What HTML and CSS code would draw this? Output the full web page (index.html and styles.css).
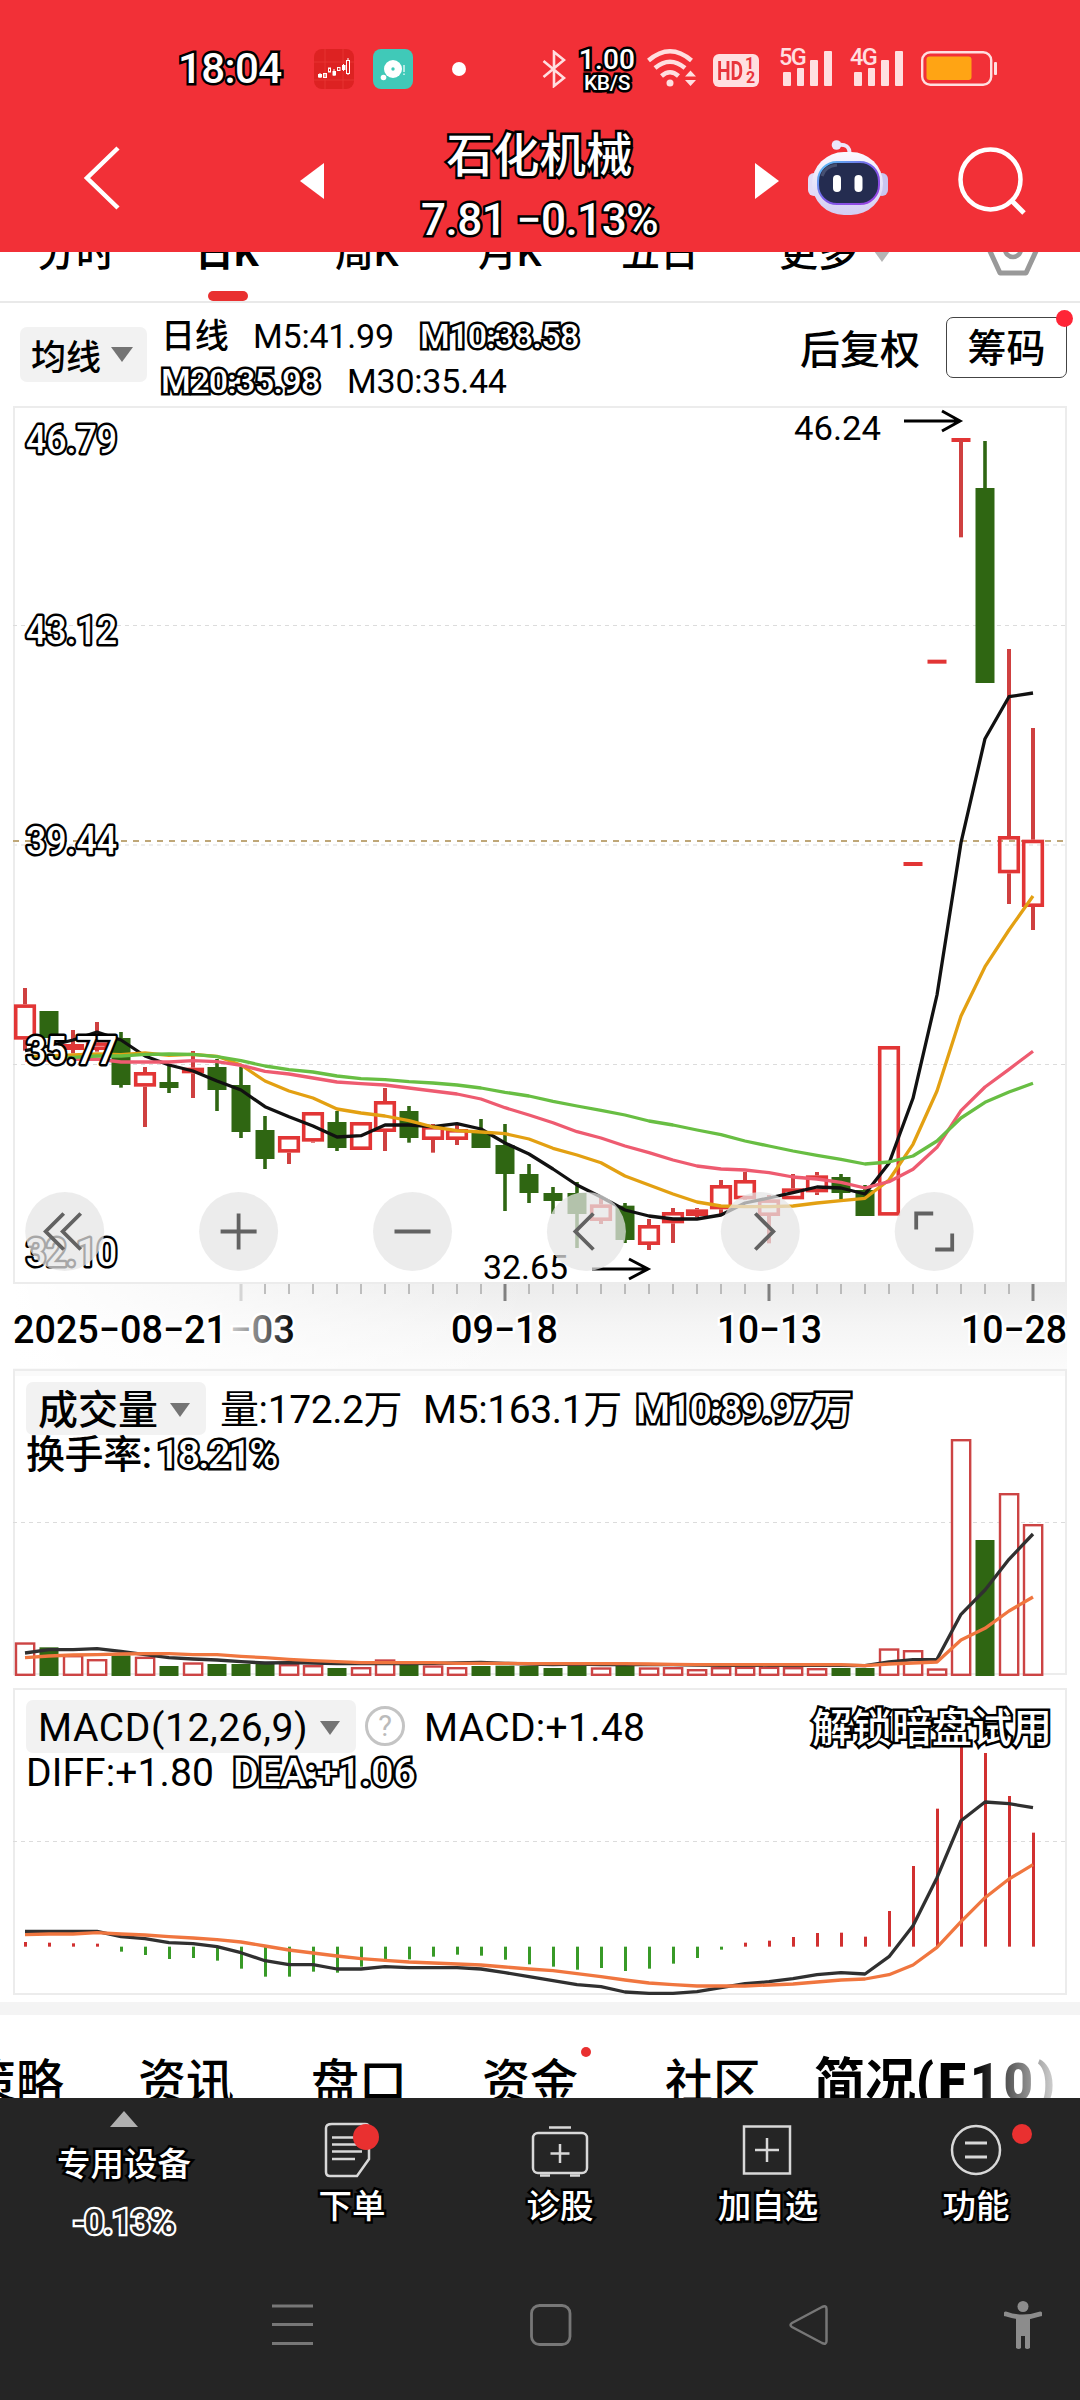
FILE: index.html
```html
<!DOCTYPE html>
<html lang="zh-CN">
<head>
<meta charset="utf-8">
<title>石化机械</title>
<link rel="stylesheet" href="styles.css">
</head>
<body>
<header class="header">
  <div class="status">
    <span class="clock outlined">18:04</span>
    <svg class="app-stock" width="40" height="40" viewBox="0 0 40 40">
      <rect width="40" height="40" rx="8" fill="#dd2222"/>
      <path d="M11 0V40M29 0V40M0 13H40M0 31H40" stroke="#e93a38" stroke-width=".7"/>
      <g fill="#fff"><rect x="4" y="25" width="4" height="3.5"/><rect x="18.500" y="22" width="3.500" height="4.500"/><rect x="28" y="16" width="3.500" height="5"/></g>
      <g fill="none" stroke="#fff" stroke-width="1"><path d="M6 24v5M11 24v5M20 20v7M29.500 15v7M34 9v17"/><rect x="9.500" y="24.500" width="3" height="4"/><rect x="14.500" y="19" width="2" height="4"/><rect x="23.500" y="18.500" width="2.500" height="3"/><rect x="32.500" y="11.500" width="3" height="13" fill="#dd2222"/></g>
    </svg>
    <svg class="app-disc" width="40" height="40" viewBox="0 0 40 40">
      <rect width="40" height="40" rx="8" fill="#40c9b8"/>
      <circle cx="20" cy="20" r="9" fill="#fff"/><circle cx="20" cy="20" r="1.700" fill="#40c9b8"/><circle cx="10.500" cy="28.500" r="2.800" fill="#fff"/>
      <path d="M31 16v7M31 24.500v1.500" stroke="#d9f5f1" stroke-width="1.500"/>
    </svg>
    <span class="more-dot"></span>
    <svg class="bluetooth" width="24" height="38" viewBox="0 0 24 38"><path d="M1.500 11 22 28 12 36V2l10 8L1.500 27" fill="none" stroke="#ffdfe0" stroke-width="2.600"/></svg>
    <div class="speed outlined"><b>1.00</b><b class="unit">KB/S</b></div>
    <svg class="wifi" width="50" height="40" viewBox="0 0 50 40">
      <g fill="none" stroke="#ffdfe0" stroke-width="4.500"><path d="M1.500 12.500Q23 -6 44.500 12.500"/><path d="M8 20Q23 7.500 38 20"/><path d="M14.500 28Q23 20.500 31.500 28"/></g>
      <circle cx="23" cy="35" r="3.500" fill="#ffdfe0"/><path d="M38 28.500 43.500 22.500 49 28.500zM38 32h11l-5.500 6z" fill="#ffdfe0"/>
    </svg>
    <span class="hd"><b>HD</b><span class="hd-n"><i>1</i><i>2</i></span></span>
    <span class="signal">
      <b>5G</b>
      <svg width="53" height="38" viewBox="0 0 53 38"><g fill="#ffdfe0"><rect x="4" y="24" width="8" height="14" rx="1"/><rect x="18" y="20" width="7" height="18" rx="1"/><rect x="31" y="12" width="8" height="26" rx="1"/><rect x="45" y="3" width="8" height="35" rx="1"/></g></svg>
    </span>
    <span class="signal second">
      <b>4G</b>
      <svg width="53" height="38" viewBox="0 0 53 38"><g fill="#ffdfe0"><rect x="4" y="24" width="8" height="14" rx="1"/><rect x="18" y="20" width="7" height="18" rx="1"/><rect x="31" y="12" width="8" height="26" rx="1"/><rect x="45" y="3" width="8" height="35" rx="1"/></g></svg>
    </span>
    <svg class="battery" width="76" height="35" viewBox="0 0 76 35"><rect x="1.200" y="1.200" width="69" height="32.500" rx="8" fill="none" stroke="#ffdfe0" stroke-width="2.400"/><rect x="5.500" y="5.500" width="45" height="23.500" rx="3" fill="#ffa414"/><rect x="73" y="11" width="3" height="13" rx="1" fill="#ffdfe0"/></svg>
  </div>
  <div class="titlebar">
    <svg class="back" width="38" height="64" viewBox="0 0 38 64"><path d="M35 2 4 32 35 62" fill="none" stroke="#fff" stroke-width="4.500"/></svg>
    <svg class="prev" width="24" height="36" viewBox="0 0 24 36"><path d="M24 0V36L0 18z" fill="#fff"/></svg>
    <div class="quote">
      <div class="stock-name outlined">石化机械</div>
      <div class="stock-price outlined">7.81 −0.13%</div>
    </div>
    <svg class="next" width="24" height="36" viewBox="0 0 24 36"><path d="M0 0V36L24 18z" fill="#fff"/></svg>
    <svg class="robot" width="82" height="76" viewBox="0 0 82 76">
      <defs>
        <linearGradient id="shell" x1="0" y1="0" x2="0" y2="1"><stop offset="0" stop-color="#fbf8ff"/><stop offset="1" stop-color="#d3cdf3"/></linearGradient>
        <linearGradient id="rim" x1="0" y1="0" x2="1" y2="1"><stop offset="0" stop-color="#57c8f5"/><stop offset=".5" stop-color="#7a5be8"/><stop offset="1" stop-color="#9b3fe0"/></linearGradient>
      </defs>
      <path d="M30 5Q43 3 42.500 14" fill="none" stroke="#ece6fb" stroke-width="4"/><circle cx="29.500" cy="5" r="4.800" fill="#ece6fb"/>
      <rect x="1" y="33" width="12" height="23" rx="6" fill="#e2dcf8"/><rect x="69" y="33" width="12" height="23" rx="6" fill="#c9c5f0"/>
      <rect x="5" y="12" width="71" height="63" rx="32" fill="url(#shell)"/>
      <rect x="11" y="22" width="61" height="42" rx="19" fill="#242c50" stroke="url(#rim)" stroke-width="2"/>
      <path d="M15 36Q18 26 30 25" fill="none" stroke="#465071" stroke-width="3"/>
      <rect x="26" y="35" width="8" height="17" rx="4" fill="#fff"/><rect x="47.500" y="35" width="8" height="17" rx="4" fill="#fff"/>
    </svg>
    <svg class="search" width="68" height="68" viewBox="0 0 68 68"><circle cx="32.500" cy="32.500" r="30" fill="none" stroke="#fff" stroke-width="4.500"/><path d="M54 54 66 66" stroke="#fff" stroke-width="5"/></svg>
  </div>
</header>

<nav class="periods">
  <span>分时</span><span class="on">日K</span><span>周K</span><span>月K</span><span>五日</span><span>更多</span>
  <svg class="caret" width="16" height="12" viewBox="0 0 16 12"><path d="M0 0H16L8 11z" fill="#b5b5b5"/></svg>
  <svg class="gear" width="54" height="54" viewBox="0 0 54 54"><path d="M14 3H40L51 27 40 51H14L3 27z" fill="none" stroke="#999" stroke-width="5" stroke-linejoin="round"/><circle cx="27" cy="27" r="8" fill="none" stroke="#999" stroke-width="4.500"/></svg>
</nav>

<section class="averages">
  <span class="pill ma-pill">均线<svg width="22" height="16" viewBox="0 0 22 16"><path d="M0 0H22L11 15z" fill="#747474"/></svg></span>
  <div class="ma-list">
    <div><span class="w-day">日线</span><span class="w-m5">M5:41.99</span><span class="hollow">M10:38.58</span></div>
    <div><span class="hollow w-m20">M20:35.98</span><span>M30:35.44</span></div>
  </div>
  <span class="adjust">后复权</span>
  <span class="chips">筹码<i class="badge"></i></span>
</section>

<section class="price">
  <svg id="price" width="1080" height="964" viewBox="0 0 1080 964"></svg>
</section>

<section class="panel volume">
  <svg id="volume" class="plot" width="1080" height="318" viewBox="0 0 1080 318"></svg>
  <div class="legend">
    <div class="row first"><span class="pill vol-pill">成交量<svg width="20" height="14" viewBox="0 0 20 14"><path d="M0 0H20L10 14z" fill="#747474"/></svg></span><span class="w-vol">量:172.2万</span><span class="w-v5">M5:163.1万</span><span class="hollow w-v10">M10:89.97万</span></div>
    <div class="row"><span class="w-turn">换手率:</span><span class="hollow turn">18.21%</span></div>
  </div>
</section>

<section class="panel macd">
  <svg id="macd" class="plot" width="1080" height="316" viewBox="0 0 1080 316"></svg>
  <div class="legend">
    <div class="row first"><span class="pill macd-pill">MACD(12,26,9)<svg width="20" height="14" viewBox="0 0 20 14"><path d="M0 0H20L10 14z" fill="#747474"/></svg></span><span class="help">?</span><span class="w-macd">MACD:+1.48</span><span class="unlock hollow">解锁暗盘试用</span></div>
    <div class="row"><span class="w-diff">DIFF:+1.80</span><span class="hollow w-dea">DEA:+1.06</span></div>
  </div>
</section>

<div class="band"></div>

<nav class="sections">
  <span class="s1">策略</span><span>资讯</span><span>盘口</span><span class="has-dot">资金<i></i></span><span>社区</span><span class="current">简况<b>(F10)</b></span>
</nav>

<footer class="footer">
  <div class="actions">
    <div class="sector">
      <svg width="28" height="16" viewBox="0 0 28 16"><path d="M14 0 28 16H0z" fill="#b0b0b0"/></svg>
      <span class="outlined">专用设备</span>
      <span class="change">-0.13%</span>
    </div>
    <div class="action a1">
      <svg width="64" height="56" viewBox="0 0 64 56"><path d="M12 2H45Q49 2 49 6V37L37 54H10Q6 54 6 50V6Q6 2 12 2z" fill="none" stroke="#d8d8d8" stroke-width="2.500"/><path d="M12 15.500H40M12 22.500H40M12 29.500H42M12 37H35" stroke="#d8d8d8" stroke-width="2.500"/><circle cx="46" cy="15" r="13" fill="#e93030"/></svg>
      <span class="outlined">下单</span>
    </div>
    <div class="action a2">
      <svg width="64" height="56" viewBox="0 0 64 56"><rect x="5" y="11" width="54" height="40" rx="5" fill="none" stroke="#d8d8d8" stroke-width="2.500"/><path d="M21 5.500H43M12 53.500H22M42 53.500H52M32 22V41M22.500 31.500H41.500" stroke="#d8d8d8" stroke-width="2.500"/></svg>
      <span class="outlined">诊股</span>
    </div>
    <div class="action a3">
      <svg width="64" height="56" viewBox="0 0 64 56"><path d="M8 4.500H54V51.500H8zM31 16V40M19 28H43" fill="none" stroke="#d8d8d8" stroke-width="2.500"/></svg>
      <span class="outlined">加自选</span>
    </div>
    <div class="action a4">
      <svg width="64" height="56" viewBox="0 0 64 56"><circle cx="32" cy="28" r="24" fill="none" stroke="#d8d8d8" stroke-width="2.500"/><path d="M21 21H43M21 35H43" stroke="#d8d8d8" stroke-width="2.800"/></svg>
      <span class="outlined">功能</span><i class="badge"></i>
    </div>
  </div>
  <div class="system">
    <svg class="n1" width="42" height="42" viewBox="0 0 42 42"><path d="M0 2H41M0 20.500H41M0 39.500H41" stroke="#777" stroke-width="3"/></svg>
    <svg class="n2" width="42" height="42" viewBox="0 0 42 42"><rect x="1.500" y="1.500" width="38.500" height="39" rx="8" fill="none" stroke="#777" stroke-width="2.800"/></svg>
    <svg class="n3" width="42" height="42" viewBox="0 0 42 42"><path d="M34 3 4 19Q1 21 4 23L34 39Q38.500 41 38.500 37V5Q38.500 1 34 3z" fill="none" stroke="#777" stroke-width="2.500"/></svg>
    <svg class="n4" width="38" height="50" viewBox="0 0 38 50"><circle cx="19" cy="6.500" r="5.500" fill="#8c8c8c"/><path d="M2 14Q19 20 36 14" fill="none" stroke="#8c8c8c" stroke-width="5" stroke-linecap="round"/><path d="M12 16H26V48Q23 50 21 48V36H17V48Q15 50 12 48z" fill="#8c8c8c"/></svg>
  </div>
</footer>
<script src="charts.js"></script>
</body>
</html>
```
FILE: styles.css
```css
* { box-sizing: border-box; }
body { margin: 0; width: 1080px; height: 2400px; overflow: hidden; background: #fff; color: #000; font-family: Roboto, "Noto Sans CJK SC", sans-serif; font-weight: 500; }
svg { display: block; flex: none; }
span { white-space: nowrap; }
i { font-style: normal; }
.outlined, .hollow { color: #fff; -webkit-text-stroke: 5px #000; paint-order: stroke fill; stroke-linejoin: round; }
text.hollow { fill: #fff; stroke: #000; stroke-width: 5px; -webkit-text-stroke: 0; font-weight: 500; }

.header { height: 252px; background: #f23037; }
.status { height: 124px; display: flex; align-items: flex-start; padding-left: 178px; }
.clock { width: 136px; padding-top: 45px; font-size: 42px; line-height: 48px; letter-spacing: -0.6px; }
.app-stock { margin-top: 49px; }
.app-disc { margin: 49px 0 0 19px; }
.more-dot { width: 14px; height: 14px; margin: 62px 0 0 39px; border-radius: 50%; background: #fff; flex: none; }
.bluetooth { margin: 50px 0 0 76px; }
.speed { width: 56px; margin: 47px 0 0 13px; display: flex; flex-direction: column; align-items: center; font-size: 28px; line-height: 25px; }
.speed b { font-weight: 500; letter-spacing: .2px; }
.speed .unit { font-size: 21px; line-height: 22px; letter-spacing: -0.3px; }
.wifi { margin: 48px 0 0 12px; }
.hd { width: 46px; height: 33px; margin: 54px 0 0 16px; border-radius: 6px; background: #ffdfe0; color: #e8343b; display: flex; flex: none; align-items: center; padding-left: 4px; font-size: 26px; }
.hd b { transform: scaleX(.74); transform-origin: left; width: 28px; }
.hd-n { display: grid; font-size: 16px; font-weight: 700; line-height: 14px; }
.hd-n i + i { padding-left: 1px; }
.signal { position: relative; margin: 48px 0 0 20px; color: #ffdfe0; }
.signal b { position: absolute; left: 0; top: 0; font-size: 23.500px; line-height: 18px; font-weight: 500; letter-spacing: -1.5px; }
.signal.second { margin-left: 18px; }
.battery { margin: 51px 0 0 18px; }
.titlebar { height: 128px; display: flex; align-items: flex-start; }
.back { margin: 22px 0 0 83px; }
.prev { margin: 39px 0 0 179px; }
.quote { width: 431px; display: flex; flex-direction: column; align-items: center; }
.stock-name { margin-top: 5px; font-size: 46.500px; line-height: 54px; }
.stock-price { margin-top: 9px; font-size: 44px; line-height: 56px; letter-spacing: -0.5px; }
.next { margin-top: 39px; }
.robot { margin: 16px 0 0 28px; }
.search { margin: 23px 0 0 69px; }

.periods { height: 51px; overflow: hidden; border-bottom: 2px solid #e9e9e9; display: flex; align-items: flex-start; padding-left: 37px; font-size: 39px; line-height: 44px; }
.periods span { margin-top: -21px; width: 147px; flex: none; }
.periods span:first-child { width: 158px; }
.periods .on { width: 140px; height: 70px; font-weight: 700; position: relative; }
.periods .on::after { content: ""; position: absolute; left: 13px; bottom: 0; width: 40px; height: 10px; border-radius: 5px; background: #e93030; }
.periods span:nth-child(3), .periods span:nth-child(4) { width: 143px; }
.periods span:nth-child(5) { width: 158px; }
.periods span:nth-child(6) { width: 95px; }
.caret { margin-top: -1px; }
.gear { margin: -30px 0 0 96px; }

.averages { height: 101px; display: flex; align-items: flex-start; }
.pill { background: #f2f2f2; border-radius: 7px; display: flex; align-items: center; flex: none; }
.ma-pill { width: 127px; height: 55px; margin: 24px 0 0 20px; padding-left: 11px; font-size: 35px; gap: 10px; }
.ma-list { width: 653px; padding: 11px 0 0 14px; font-size: 34px; line-height: 45px; letter-spacing: -0.2px; font-weight: 400; }
.ma-list .hollow, .legend .hollow { font-weight: 500; letter-spacing: -0.6px; }
.ma-list div { display: flex; }
.w-day { width: 92px; font-weight: 500; }
.w-m5 { width: 167px; padding-left: 0; }
.w-m20 { width: 186px; }
.adjust { width: 146px; margin-top: 21px; font-size: 40px; line-height: 54px; }
.chips { width: 121px; height: 61px; margin-top: 14px; border: 1.500px solid #444; border-radius: 7px; text-align: center; font-size: 39px; line-height: 62px; position: relative; }
.badge { position: absolute; width: 17px; height: 17px; border-radius: 50%; background: #ff2536; right: -7px; top: -8px; }

.price { height: 964px; }
.price text { font-weight: 400; }
.price text.hollow, .price text.date { font-weight: 500; }
.panel { position: relative; }
.volume { height: 318px; }
.macd { height: 316px; }
.plot { position: absolute; left: 0; top: 0; }
.legend { position: relative; padding: 14px 0 0 26px; font-size: 39px; letter-spacing: -0.4px; font-weight: 400; }
.row { display: flex; line-height: 41px; }
.row.first { height: 53px; line-height: 57px; }
.vol-pill, .macd-pill { height: 53px; padding-left: 12px; gap: 12px; }
.vol-pill { width: 180px; font-size: 40px; margin-right: 14px; padding-top: 3px; letter-spacing: 0; font-weight: 500; }
.macd-pill { width: 330px; padding-top: 3px; letter-spacing: .6px; }
.w-vol { width: 203px; }
.w-v5 { width: 213px; }
.legend .w-v10 { letter-spacing: -1.2px; }
.w-turn { width: 131px; font-weight: 500; }
.legend .turn { letter-spacing: -1.4px; }
.help { width: 40px; height: 40px; margin: 6px 19px 0 9px; border: 3px solid #c4c4c4; border-radius: 50%; color: #bbb; font-size: 29px; line-height: 35px; text-align: center; }
.w-macd { width: 388px; letter-spacing: .3px; }
.legend .unlock { font-size: 40px; letter-spacing: 0; }
.w-diff { width: 207px; letter-spacing: .1px; }
.legend .w-dea { letter-spacing: 0; }

.band { height: 13px; background: #f4f4f4; }
.sections { height: 83px; overflow: hidden; position: relative; display: flex; font-size: 48px; line-height: 56px; padding-top: 40px; }
.sections span { width: 173px; flex: none; }
.sections .s1 { margin-left: -32px; width: 170px; }
.sections .has-dot { width: 183px; position: relative; }
.sections span:nth-child(3) { width: 171px; }
.sections span:nth-child(5) { width: 149px; }
.has-dot i { position: absolute; left: 99px; top: -8px; width: 10px; height: 10px; border-radius: 50%; background: #e93030; }
.sections .current { width: 262px; font-size: 51px; font-weight: 700; background: linear-gradient(90deg, #000 160px, #333 180px, #aaa 225px, #eee 252px); -webkit-background-clip: text; background-clip: text; color: transparent; }
.current b { letter-spacing: 4px; }

.footer { height: 302px; background: #252525; }
.actions { height: 190px; display: flex; align-items: flex-start; }
.actions span { font-size: 33.500px; line-height: 40px; }
.sector { width: 248px; display: flex; flex-direction: column; align-items: center; padding-top: 13px; }
.sector .outlined { margin-top: 18px; }
.actions .change { margin-top: 18px; color: #252525; font-size: 35px; letter-spacing: -1px; -webkit-text-stroke: 4.500px #fff; paint-order: stroke fill; }
.action { width: 208px; display: flex; flex-direction: column; align-items: center; padding-top: 24px; position: relative; }
.action .outlined { margin-top: 9px; }
.action .badge { width: 20px; height: 20px; right: 48px; top: 26px; background: #e93030; }
.system { display: flex; align-items: center; height: 74px; }
.n1 { margin-left: 272px; }
.n2 { margin-left: 216px; }
.n3 { margin-left: 216px; }
.n4 { margin-left: 174px; }
```
FILE: charts.js
```js
// Vertical data values are thirds of a pixel; one trading day is 24px wide.
const RED = '#e23535', GREEN = '#2f6612';
const dayX = i => 25 + i * 24;
const line = (x1, y1, x2, y2, color, width, extra = '') =>
  `<line x1="${x1}" y1="${y1}" x2="${x2}" y2="${y2}" stroke="${color}" stroke-width="${width}" ${extra}/>`;
const rect = (x, y, w, h, fill, extra = '') =>
  `<rect x="${x}" y="${y}" width="${w}" height="${h}" fill="${fill}" ${extra}/>`;
const curve = (values, offset, color, width) =>
  `<polyline points="${values.map((v, i) => dayX(i) + ',' + (v / 3 + offset).toFixed(1)).join(' ')}" fill="none" stroke="${color}" stroke-width="${width}" stroke-linejoin="round"/>`;
const label = (x, y, width, size, text, extra = '') =>
  `<text x="${x}" y="${y}" font-size="${size}" textLength="${width}" lengthAdjust="spacingAndGlyphs" ${extra}>${text}</text>`;
const frame = (y, h) => rect(14, y, 1052, h, 'none', 'stroke="#ececec" stroke-width="2"');

// [colour, high, body top, body bottom, low]
const candles = [
  ['r',84,133,239,272],['g',153,153,234,234],['r',210,252,270,280],['r',186,247,270,275],['g',216,234,375,383],
  ['r',321,336,380,501],['g',318,366,384,399],['r',273,323,340,414],['g',297,321,390,453],['g',321,375,516,534],
  ['g',468,510,597,627],['r',528,528,578,612],['r',456,456,545,548],['g',453,486,564,573],['r',486,486,570,570],
  ['r',384,423,516,573],['g',438,453,534,548],['r',492,498,540,578],['r',495,507,540,555],['g',477,516,564,564],
  ['g',492,555,642,753],['g',612,642,699,729],['g',681,699,723,762],['g',666,699,762,864],['r',712,733,783,792],
  ['g',729,737,840,849],['r',777,795,855,870],['r',744,756,790,849],['r',744,748,768,772],['r',660,675,748,765],
  ['r',636,660,718,720],['r',705,718,768,850],['r',642,685,718,718],['r',636,646,697,705],['g',642,651,699,718],
  ['g',675,690,768,768],['r',258,258,767,767],['d',-288],['d',-895],['t',-1560,0,0,-1268],
  ['g',-1557,-1416,-831,-831],['r',-933,-372,-260,-168],['r',-696,-361,-159,-90]
];
const ma5 = [272,258,240,216,240,288,315,333,363,390,440,470,498,531,527,495,495,500,491,507,549,582,627,675,711,750,768,777,777,765,729,714,698,681,684,702,610,415,105,-352,-664,-790,-801];
const ma10 = [290,288,285,282,284,279,286,283,289,315,363,393,414,447,459,468,482,501,512,516,521,537,565,585,608,648,675,702,726,738,740,740,738,729,722,715,660,553,393,168,20,-90,-192];
const ma20 = [300,300,298,297,306,306,306,302,305,316,334,342,354,366,371,375,384,393,402,417,443,465,488,515,534,558,578,600,618,627,630,638,651,657,667,684,665,628,562,452,381,328,274];
const ma30 = [296,295,292,288,288,283,282,283,290,302,318,329,336,348,356,359,365,369,375,384,397,408,424,438,451,465,483,495,510,524,543,558,573,586,598,612,606,588,543,474,427,396,370];

function drawPrice() {
  const base = 556;
  let s = '<defs><linearGradient id="axis" x1="0" y1="0" x2="0" y2="1"><stop offset="0" stop-color="#ececec"/><stop offset=".5" stop-color="#f5f5f5"/><stop offset="1" stop-color="#fbfbfb"/></linearGradient>'
    + '<linearGradient id="axisFade"><stop offset="0" stop-color="#fff"/><stop offset="1" stop-color="#fff" stop-opacity="0"/></linearGradient>'
    + '<linearGradient id="dateFade"><stop offset="0" stop-color="#ccc"/><stop offset=".5" stop-color="#777"/><stop offset="1" stop-color="#000"/></linearGradient></defs>';
  s += rect(13, 880, 1054, 84, 'url(#axis)') + rect(13, 880, 520, 84, 'url(#axisFade)') + frame(3, 876);
  s += line(13, 221.5, 1066, 221.5, '#dcdcdc', 1.2, 'stroke-dasharray="4 4"');
  s += line(13, 441, 1066, 441, '#e8e8e8', 1.5, 'stroke-dasharray="4 4"');
  s += line(13, 437, 1066, 437, '#bfa778', 2, 'stroke-dasharray="6 6"');
  s += line(13, 660.5, 1066, 660.5, '#dcdcdc', 1.2, 'stroke-dasharray="4 4"');
  candles.forEach(([kind, high, top, bottom, low], i) => {
    const x = dayX(i), at = v => v / 3 + base;
    if (kind === 'd' || kind === 't') {
      s += rect(x - 9.5, at(high) - 2, 19, 4, RED);
      if (kind === 't') s += line(x, at(high), x, at(low), '#cf4040', 4);
    } else if (kind === 'g') {
      s += line(x, at(high), x, at(low), GREEN, 3.6) + rect(x - 9.5, at(top), 19, (bottom - top) / 3, GREEN);
    } else {
      s += line(x, at(high), x, at(top), '#cf4040', 4) + line(x, at(bottom), x, at(low), '#cf4040', 4);
      s += rect(x - 9.3, at(top) + 1.8, 18.6, Math.max((bottom - top) / 3 - 3.6, 1), 'none', `stroke="${RED}" stroke-width="3.6"`);
    }
  });
  s += curve(ma5, base, '#111', 3.3) + curve(ma10, base, '#e3a012', 3.3) + curve(ma20, base, '#ee5b70', 3.3) + curve(ma30, base, '#68be43', 3.3);
  const hollow = 'class="hollow" paint-order="stroke"';
  [[46.79, 48.5], [43.12, 239.5], [39.44, 449.5], [35.77, 660], [32.1, 861.5]].forEach(([v, y]) => {
    s += label(26, y, 91, 38.5, v.toFixed(2), hollow);
  });
  s += label(794, 36, 87, 33, '46.24') + '<path d="M904 17H960M942 7 960 17 942 27" fill="none" stroke="#000" stroke-width="3"/>';
  s += label(483, 875, 85, 33.5, '32.65') + '<path d="M592 865H648M629 855 648 865 629 875" fill="none" stroke="#000" stroke-width="3"/>';
  const glyphs = [
    'M-1 -18 -19 0 -1 18M16 -18 -2 0 16 18', 'M-18 0H18M0 -18V18', 'M-18 0H18',
    'M7 -18 -11 0 7 18', 'M-5 -18 13 0 -5 18', 'M-18 -2V-18H-1M18 2V18H1'
  ];
  glyphs.forEach((d, i) => {
    s += `<g transform="translate(${64.7 + i * 173.9} 827.500)"><circle r="39.500" fill="rgba(229,229,229,.73)"/><path d="${d}" fill="none" stroke="#626262" stroke-width="3.800"/></g>`;
  });
  for (let i = 9; i <= 42; i++) {
    const major = [9, 20, 31, 42].includes(i);
    s += line(dayX(i), 880, dayX(i), major ? 897 : 890, i === 9 ? '#d5d5d5' : major ? '#808080' : '#999', major ? 3 : 1.2);
  }
  const halo = 'class="date" stroke="#fff" stroke-width="5" paint-order="stroke"';
  const date = (x, w, t, more = '') => label(x, 939, w, 38.5, t, halo + more);
  s += date(13, 214, '2025−08−21') + date(230, 65, '−03', ' fill="url(#dateFade)"');
  s += date(451, 107, '09−18') + date(717, 105, '10−13') + date(961, 106, '10−28');
  document.getElementById('price').innerHTML = s;
}

const volumeTops = [847,862,885,897,886,890,918,907,912,912,912,912,915,924,921,898,915,916,921,918,917,918,924,917,922,918,922,921,927,921,920,920,921,924,924,924,865,870,925,237,540,399,492];
// one letter per day: r for a rise, g for a fall
const volumeKinds = 'rgrrgrgrgggrrgrrgrrgggggrgrrrrrrrrggrrrrgrr';
const vol5 = [879,869,869,866,874,884,893,897,900,905,909,908,909,911,911,911,911,910,909,907,910,912,914,912,914,914,914,914,915,916,915,916,916,915,916,917,906,899,898,763,690,598,522];
const vol10 = [893,888,885,884,882,881,881,884,884,889,893,898,902,905,908,908,908,908,910,910,910,911,911,911,911,911,912,913,914,914,914,914,914,914,914,917,912,909,906,840,805,753,711];

function drawVolume() {
  const base = -8;
  let s = rect(13, 0, 1054, 8, '#fafafa') + frame(2, 304) + line(13, 154.5, 1066, 154.5, '#dcdcdc', 1.2, 'stroke-dasharray="4 4"');
  volumeTops.forEach((v, i) => {
    const x = dayX(i), y = v / 3 + base, h = 308 - y;
    s += volumeKinds[i] === 'g' ? rect(x - 9.5, y, 19, h, GREEN)
      : rect(x - 9, y + 1.2, 18.2, h - 2.4, '#fff', 'stroke="#cc4444" stroke-width="2.400"');
  });
  s += curve(vol5, base, '#303030', 3.3) + curve(vol10, base, '#f0763f', 3.3);
  document.getElementById('volume').innerHTML = s;
}

const bars = [786,788,790,791,815,825,837,834,842,866,890,890,875,878,860,842,838,830,824,827,839,853,860,869,864,873,866,851,834,809,788,782,771,759,758,770,693,558,386,190,219,348,458];
const diff = [754,754,754,754,770,776,788,791,800,818,842,854,854,867,867,860,863,863,863,867,878,890,902,914,920,936,940,940,935,923,911,905,896,884,878,882,830,737,593,422,366,371,383];
const dea = [764,762,762,758,762,765,770,774,779,786,798,810,819,828,836,841,846,849,852,855,861,867,872,881,890,900,909,914,918,918,918,915,912,906,900,897,884,855,802,725,653,597,554];

function drawMacd() {
  const base = -6, zero = 800 / 3 + base;
  let s = frame(3, 305) + line(13, 155.5, 1066, 155.5, '#dcdcdc', 1.2, 'stroke-dasharray="4 4"');
  bars.forEach((v, i) => {
    s += line(dayX(i) + .5, zero, dayX(i) + .5, v / 3 + base, v > 800 ? '#389a27' : '#d13030', 3);
  });
  s += curve(diff, base, '#303030', 3.3) + curve(dea, base, '#f0763f', 3.3);
  document.getElementById('macd').innerHTML = s;
}

drawPrice();
drawVolume();
drawMacd();
```
